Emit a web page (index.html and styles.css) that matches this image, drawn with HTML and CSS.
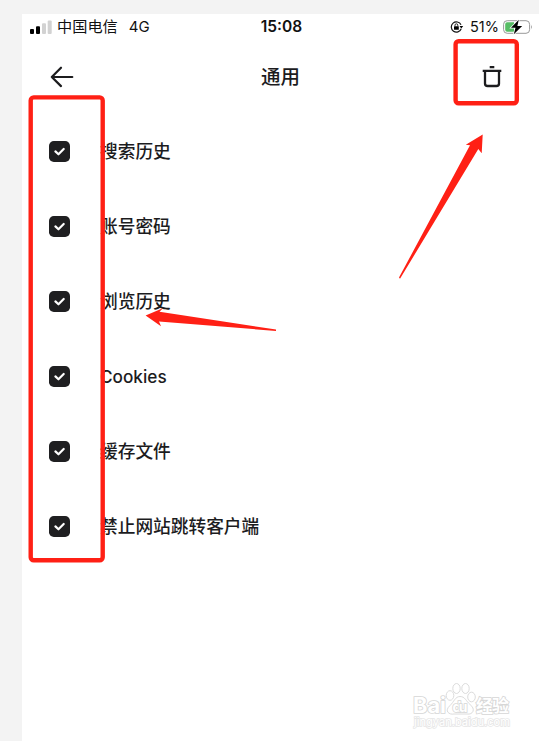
FILE: index.html
```html
<!DOCTYPE html>
<html lang="zh-CN">
<head>
<meta charset="utf-8">
<title>通用</title>
<link rel="stylesheet" href="styles.css">
</head>
<body>
<svg class="defs" width="0" height="0">
  <symbol id="check" viewBox="0 0 20 20">
    <rect width="20" height="20" rx="4.6" fill="#1f1f21"/>
    <path d="M6.1 9.9 9 12.6 14 7.6" fill="none" stroke="#fff" stroke-width="2.1" stroke-linecap="round" stroke-linejoin="round"/>
  </symbol>
</svg>
<main class="phone">
  <header class="status">
    <div class="carrier">
      <svg width="22" height="14" viewBox="0 0 22 14">
        <rect x="0" y="9" width="4" height="5" rx="1"/>
        <rect x="6" y="6.3" width="4" height="7.7" rx="1"/>
        <rect x="12" y="3.3" width="4" height="10.7" rx="1" fill="#d2d2d2"/>
        <rect x="17.7" y="0.5" width="4" height="13.5" rx="1" fill="#d2d2d2"/>
      </svg>
      <span class="name">中国电信</span><span class="net">4G</span>
    </div>
    <div class="time">15:08</div>
    <div class="power">
      <svg width="14" height="12" viewBox="0 0 14 12">
        <path d="M11.2 7.7A5.1 5.1 0 1 1 11 3.8" fill="none" stroke="#151515" stroke-width="1.2"/>
        <path d="M9.5 5H13.2L11.3 7.5Z"/>
        <rect x="4" y="5.2" width="4.8" height="3.5" rx=".5"/>
        <path d="M5 5.4V4.2a1.4 1.4 0 0 1 2.8 0v1.2" fill="none" stroke="#151515" stroke-width=".9"/>
      </svg>
      <span class="percent">51%</span>
      <svg width="30" height="16" viewBox="0 0 30 16">
        <rect x=".6" y="1.7" width="26" height="12.6" rx="3.6" fill="#fff" stroke="#999" stroke-width="1"/>
        <path d="M4.2 3.3H11V12.7H4.2a2 2 0 0 1-2-2V5.3a2 2 0 0 1 2-2Z" fill="#57bd65"/>
        <path d="M28 5.8q1.8 2.2 0 4.4Z" fill="#999"/>
        <path d="M15.8.8 8 8.8H12.5L10.8 15.2 19.2 6.9H14.4Z" fill="#000" stroke="#fff" stroke-width="1.4" paint-order="stroke"/>
      </svg>
    </div>
  </header>
  <nav class="nav">
    <svg class="back" width="24" height="22" viewBox="0 0 24 22"><path d="M22.3 11H1.8M11 1.7 1.8 11 11 20.1" fill="none" stroke="#1c1c1e" stroke-width="2.2" stroke-linecap="round" stroke-linejoin="round"/></svg>
    <h1>通用</h1>
    <svg class="trash" width="20" height="22" viewBox="0 0 20 22"><path d="M7.7 1.2h4.6M.7 4.8h18.6M3 4.8V17.4q0 2.6 2.6 2.6h8.8q2.6 0 2.6-2.6V4.8" fill="none" stroke="#1c1c1e" stroke-width="2.3"/></svg>
  </nav>
  <ul class="list">
    <li><svg width="21" height="21"><use href="#check"/></svg><span>搜索历史</span></li>
    <li><svg width="21" height="21"><use href="#check"/></svg><span>账号密码</span></li>
    <li><svg width="21" height="21"><use href="#check"/></svg><span>浏览历史</span></li>
    <li><svg width="21" height="21"><use href="#check"/></svg><span class="latin">Cookies</span></li>
    <li><svg width="21" height="21"><use href="#check"/></svg><span>缓存文件</span></li>
    <li><svg width="21" height="21"><use href="#check"/></svg><span>禁止网站跳转客户端</span></li>
  </ul>
</main>
<svg class="overlay" width="539" height="741" viewBox="0 0 539 741">
  <g fill="none" stroke="#ff2015" stroke-width="4.4">
    <rect x="30.7" y="97.4" width="72" height="462.9" rx="3"/>
    <rect x="455.6" y="41.3" width="61.2" height="61.9" rx="3"/>
  </g>
  <g fill="#ff2015">
    <path d="M482.7 134.6 465.8 144.8 470 145.2 399 277.6 400 278.8 478.3 149 481.7 153.2Z"/>
    <path d="M145.6 315.6 162.8 308.2 159.5 311.8 276 329.6V331L159 321.4 161 326.3Z"/>
  </g>
  <g class="mark">
    <text class="bai" x="413" y="713" textLength="33" lengthAdjust="spacingAndGlyphs">Bai</text>
    <g class="paw">
      <ellipse cx="450" cy="695.5" rx="3.8" ry="4.8"/>
      <ellipse cx="456.5" cy="688.5" rx="3.7" ry="5"/>
      <ellipse cx="465.5" cy="688.5" rx="3.7" ry="5"/>
      <ellipse cx="471.5" cy="697" rx="3.8" ry="4.8"/>
      <path d="M460 696.5C455 696.5 454 702 450 705.5C444 711 449 715 454 714H467C473 715 476 709 470 704.5C466 701 465 696.5 460 696.5Z"/>
    </g>
    <text class="du" x="452.5" y="711.5" textLength="15">du</text>
    <text class="jy" x="476" y="712" textLength="33">经验</text>
    <text class="url" x="414" y="726" textLength="96" lengthAdjust="spacingAndGlyphs">jingyan.baidu.com</text>
  </g>
</svg>
</body>
</html>
```
FILE: styles.css
```css
* { box-sizing: border-box; }

body {
  margin: 0;
  height: 741px;
  padding: 14px 0 0 22px;
  overflow: hidden;
  background: #f3f3f3;
  color: #1c1c1e;
  font-family: Inter, "Noto Sans CJK SC", sans-serif;
}

.defs { position: absolute; }

.phone { height: 727px; background: #fff; }

.status {
  display: grid;
  grid-template-columns: 1fr auto 1fr;
  align-items: center;
  height: 26px;
  padding: 0 6px 0 8px;
  font-size: 14.5px;
  line-height: 26px;
  color: #111;
}

.carrier, .power { display: flex; align-items: center; }
.carrier .name { margin-left: 5px; font-size: 15.2px; }
.carrier .net { margin-left: 11px; font-size: 15px; }
.time { font-weight: 600; font-size: 15.5px; }
.power { justify-content: flex-end; }
.power .percent { margin: 0 4px 0 6px; }

.nav {
  display: grid;
  grid-template-columns: 1fr auto 1fr;
  align-items: center;
  height: 74px;
  padding: 0 28px;
}

.nav h1 { margin: 0; font-size: 19.5px; font-weight: 500; line-height: 28px; }
.trash { justify-self: end; margin-right: 9px; }

.list { margin: 0; padding: 0 0 0 27px; list-style: none; }
.list li { display: flex; align-items: center; gap: 30px; height: 75px; font-size: 17.7px; line-height: 26px; }
.list span { padding-top: 1px; font-weight: 500; }
.list .latin { font-size: 17.2px; }

.overlay { position: absolute; left: 0; top: 0; }

.mark text { fill: #fff; stroke: #d6d6d6; stroke-width: 1.6px; paint-order: stroke; font-family: Inter, "Noto Sans CJK SC", sans-serif; }
.paw { fill: #fff; stroke: #dcdcdc; stroke-width: 1; }
.bai { font-size: 21px; font-weight: 700; }
.du { font-size: 14px; font-weight: 700; }
.jy { font-size: 17px; font-weight: 700; }
.mark .url { font-size: 11px; stroke: #e6e6e6; }
```
